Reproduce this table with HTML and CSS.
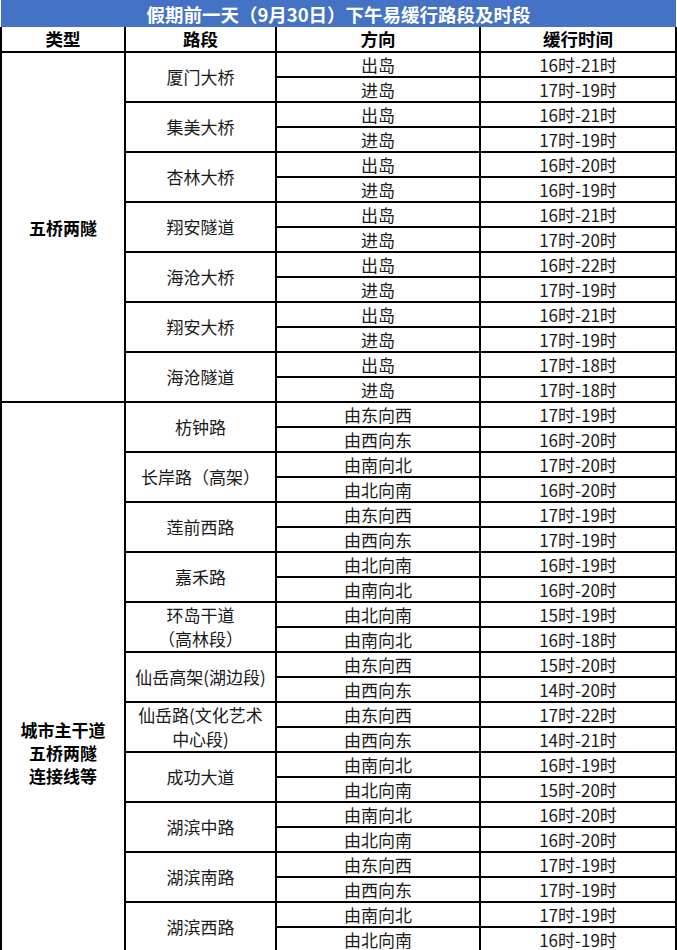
FILE: index.html
```html
<!DOCTYPE html>
<html lang="zh">
<head>
<meta charset="utf-8">
<title>假期前一天下午易缓行路段及时段</title>
<link rel="stylesheet" href="styles.css">
</head>
<body>
<table class="sheet">
  <colgroup>
    <col class="c-type">
    <col class="c-road">
    <col class="c-dir">
    <col class="c-time">
  </colgroup>
  <tr class="title-row"><td colspan="4" class="title">假期前一天（9月30日）下午易缓行路段及时段</td></tr>
  <tr class="head-row"><th>类型</th><th>路段</th><th>方向</th><th>缓行时间</th></tr>

  <tr class="r"><td rowspan="14" class="type">五桥两隧</td><td rowspan="2" class="road">厦门大桥</td><td>出岛</td><td>16时-21时</td></tr>
  <tr class="r"><td>进岛</td><td>17时-19时</td></tr>
  <tr class="r"><td rowspan="2" class="road">集美大桥</td><td>出岛</td><td>16时-21时</td></tr>
  <tr class="r"><td>进岛</td><td>17时-19时</td></tr>
  <tr class="r"><td rowspan="2" class="road">杏林大桥</td><td>出岛</td><td>16时-20时</td></tr>
  <tr class="r"><td>进岛</td><td>16时-19时</td></tr>
  <tr class="r"><td rowspan="2" class="road">翔安隧道</td><td>出岛</td><td>16时-21时</td></tr>
  <tr class="r"><td>进岛</td><td>17时-20时</td></tr>
  <tr class="r"><td rowspan="2" class="road">海沧大桥</td><td>出岛</td><td>16时-22时</td></tr>
  <tr class="r"><td>进岛</td><td>17时-19时</td></tr>
  <tr class="r"><td rowspan="2" class="road">翔安大桥</td><td>出岛</td><td>16时-21时</td></tr>
  <tr class="r"><td>进岛</td><td>17时-19时</td></tr>
  <tr class="r"><td rowspan="2" class="road">海沧隧道</td><td>出岛</td><td>17时-18时</td></tr>
  <tr class="r"><td>进岛</td><td>17时-18时</td></tr>

  <tr class="r"><td rowspan="22" class="type type-long">城市主干道<br>五桥两隧<br>连接线等</td><td rowspan="2" class="road">枋钟路</td><td>由东向西</td><td>17时-19时</td></tr>
  <tr class="r"><td>由西向东</td><td>16时-20时</td></tr>
  <tr class="r"><td rowspan="2" class="road">长岸路（高架）</td><td>由南向北</td><td>17时-20时</td></tr>
  <tr class="r"><td>由北向南</td><td>16时-20时</td></tr>
  <tr class="r"><td rowspan="2" class="road">莲前西路</td><td>由东向西</td><td>17时-19时</td></tr>
  <tr class="r"><td>由西向东</td><td>17时-19时</td></tr>
  <tr class="r"><td rowspan="2" class="road">嘉禾路</td><td>由北向南</td><td>16时-19时</td></tr>
  <tr class="r"><td>由南向北</td><td>16时-20时</td></tr>
  <tr class="r"><td rowspan="2" class="road two">环岛干道<br>（高林段）</td><td>由北向南</td><td>15时-19时</td></tr>
  <tr class="r"><td>由南向北</td><td>16时-18时</td></tr>
  <tr class="r"><td rowspan="2" class="road">仙岳高架(湖边段)</td><td>由东向西</td><td>15时-20时</td></tr>
  <tr class="r"><td>由西向东</td><td>14时-20时</td></tr>
  <tr class="r"><td rowspan="2" class="road two">仙岳路(文化艺术<br>中心段)</td><td>由东向西</td><td>17时-22时</td></tr>
  <tr class="r"><td>由西向东</td><td>14时-21时</td></tr>
  <tr class="r"><td rowspan="2" class="road">成功大道</td><td>由南向北</td><td>16时-19时</td></tr>
  <tr class="r"><td>由北向南</td><td>15时-20时</td></tr>
  <tr class="r"><td rowspan="2" class="road">湖滨中路</td><td>由南向北</td><td>16时-20时</td></tr>
  <tr class="r"><td>由北向南</td><td>16时-20时</td></tr>
  <tr class="r"><td rowspan="2" class="road">湖滨南路</td><td>由东向西</td><td>17时-19时</td></tr>
  <tr class="r"><td>由西向东</td><td>17时-19时</td></tr>
  <tr class="r"><td rowspan="2" class="road">湖滨西路</td><td>由南向北</td><td>17时-19时</td></tr>
  <tr class="r"><td>由北向南</td><td>16时-19时</td></tr>
</table>
</body>
</html>
```
FILE: styles.css
```css
html, body {
  margin: 0;
  padding: 0;
  background: #ffffff;
}

body {
  font-family: "Noto Sans CJK SC", "Noto Sans", sans-serif;
  color: #1a1a1a;
}

.sheet {
  border-collapse: collapse;
  table-layout: fixed;
  width: 676px;
  margin: 0;
}

.c-type { width: 124px; }
.c-road { width: 151px; }
.c-dir  { width: 204px; }
.c-time { width: 196px; }

.sheet td,
.sheet th {
  border: 2px solid #000;
  padding: 0;
  text-align: center;
  vertical-align: middle;
  font-size: 17px;
  line-height: 20px;
  white-space: nowrap;
}

.title-row { height: 27px; }

.sheet td.title {
  border: hidden;
  background: #4472c4;
  color: #ffffff;
  font-weight: bold;
  font-size: 18.5px;
  line-height: 24px;
  padding-top: 1px;
}

.head-row { height: 25px; }

.sheet th {
  font-weight: bold;
  color: #000;
  font-size: 17.5px;
}

.r { height: 25px; }

.sheet td.type {
  font-weight: bold;
  color: #000;
  line-height: 23px;
}

.sheet td.type-long {
  padding-top: 150px;
}

.sheet td.road.two {
  line-height: 24px;
}
```
